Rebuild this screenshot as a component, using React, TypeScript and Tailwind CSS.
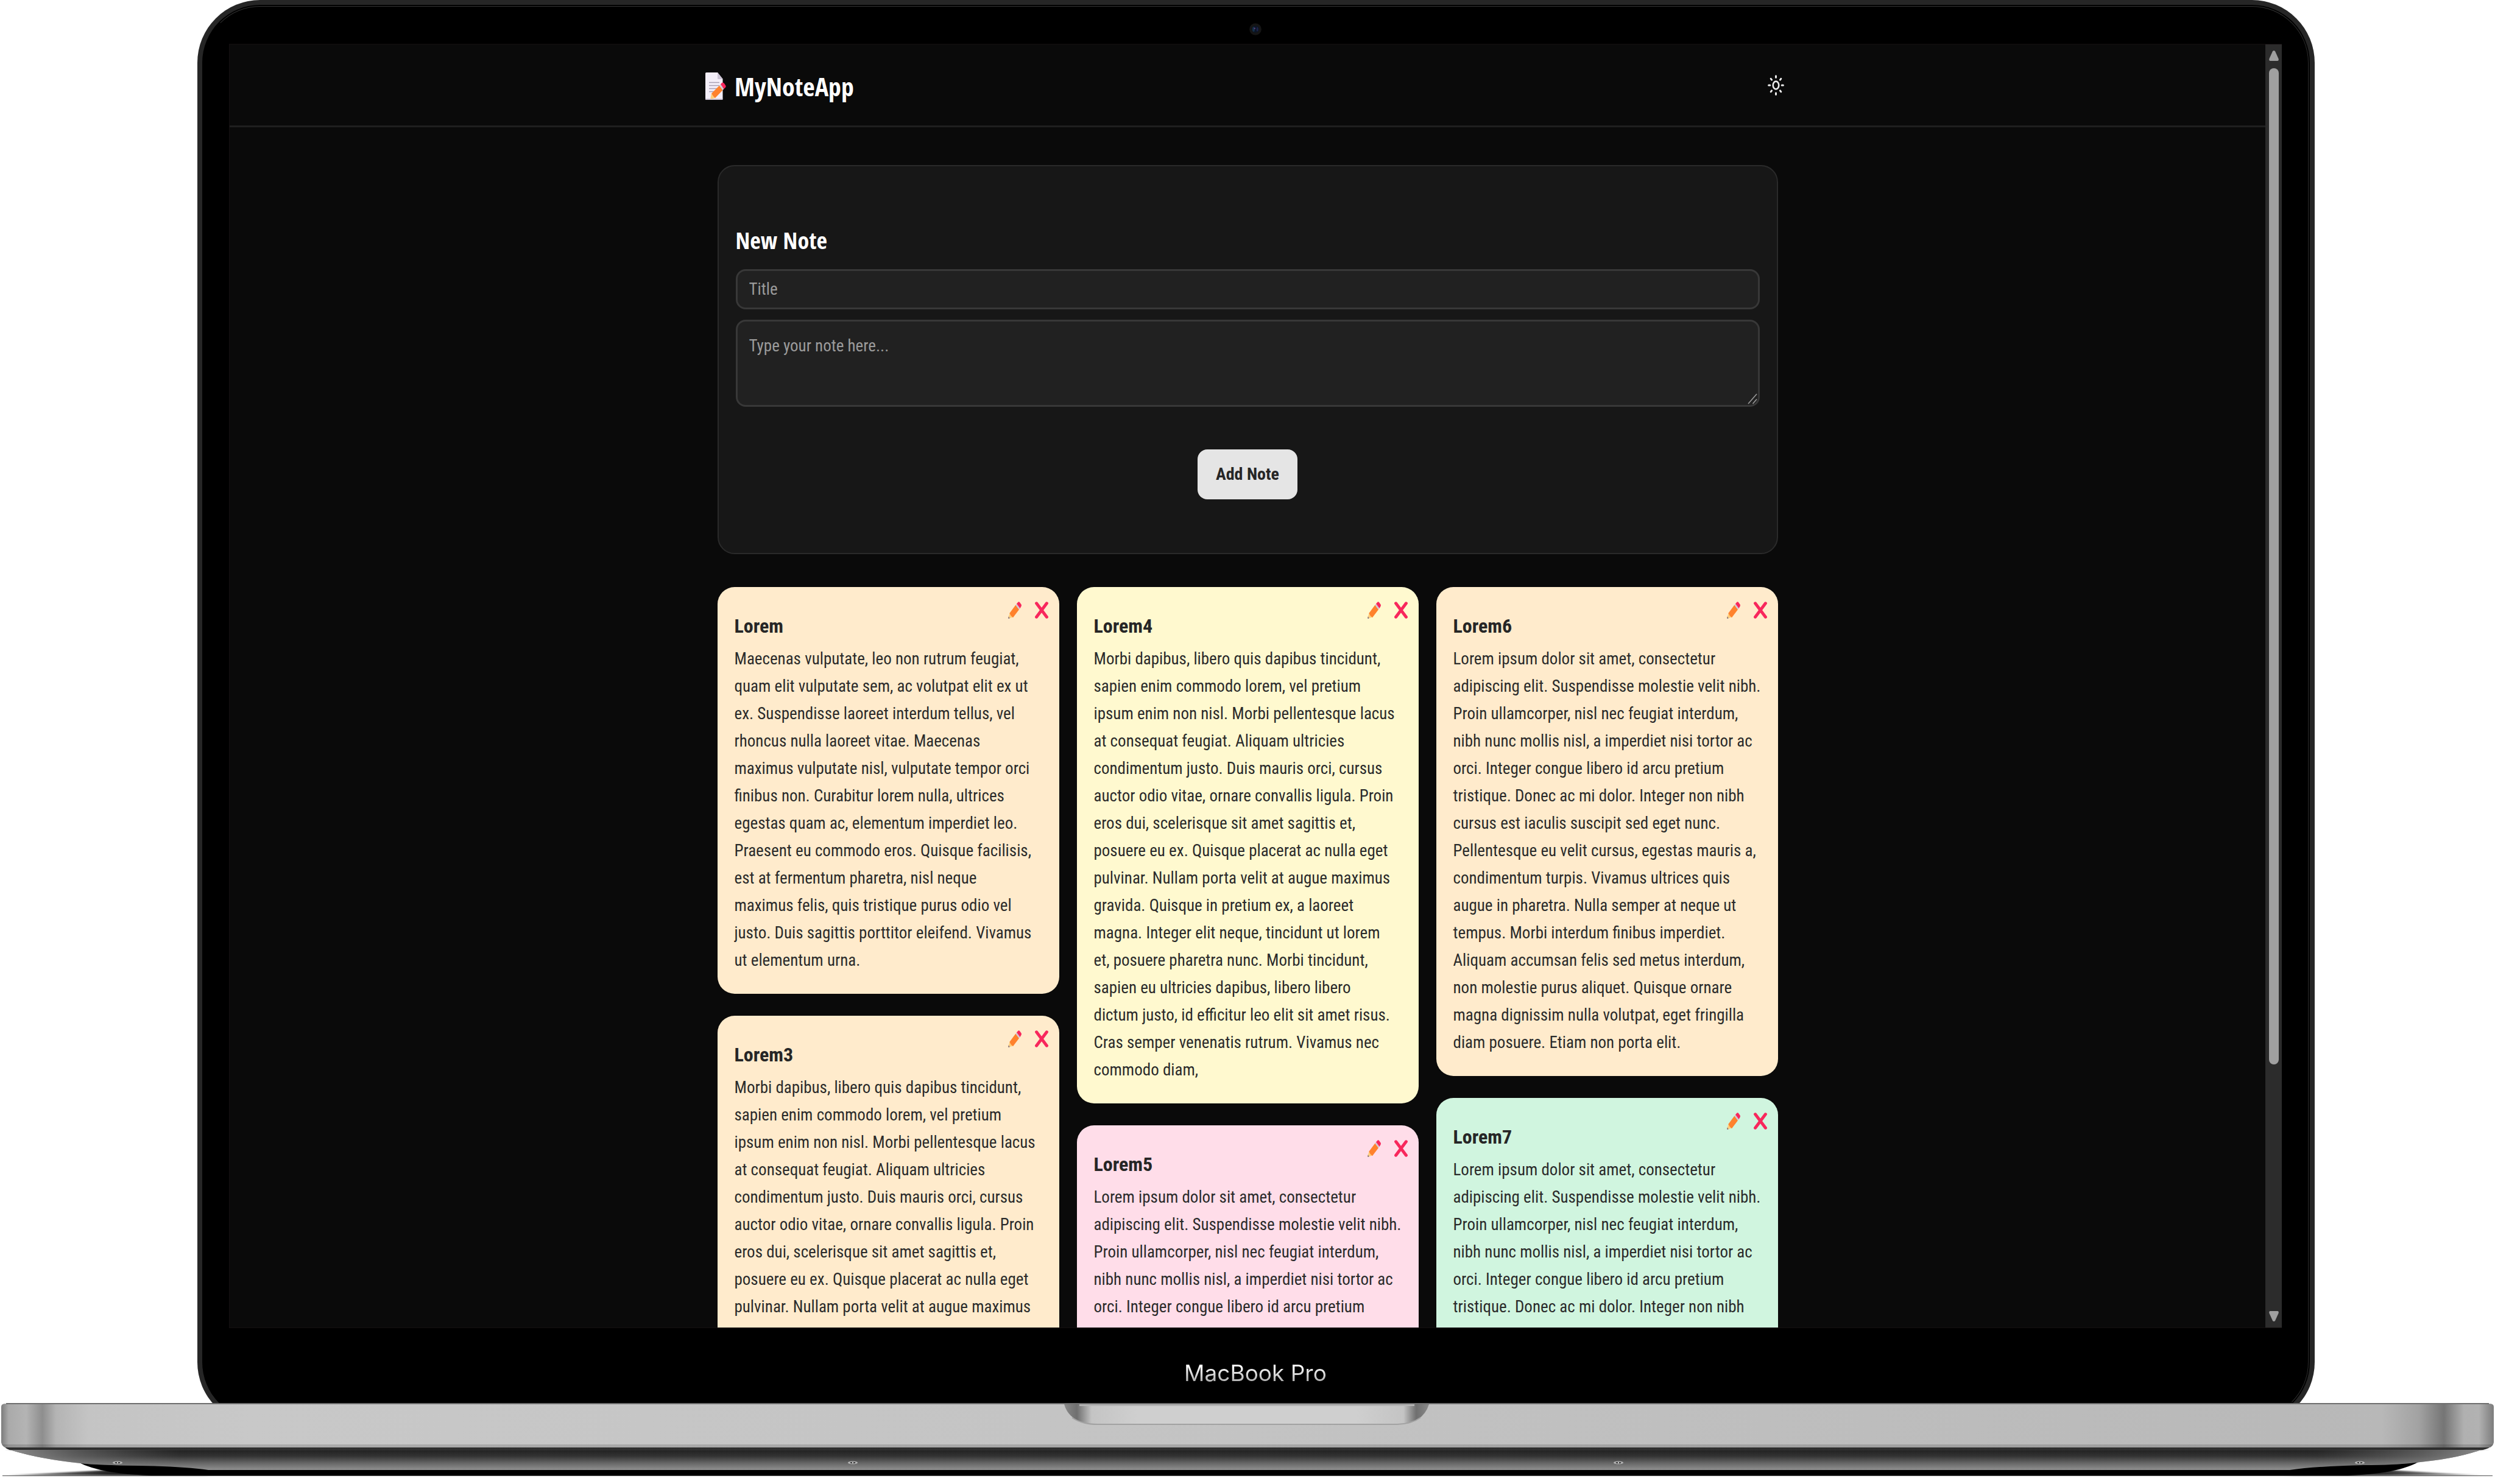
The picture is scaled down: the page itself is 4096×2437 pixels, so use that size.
import React from "react";

type Note = { title: string; tint: string; text: string };

const MORBI = `Morbi dapibus, libero quis dapibus tincidunt,
sapien enim commodo lorem, vel pretium
ipsum enim non nisl. Morbi pellentesque lacus
at consequat feugiat. Aliquam ultricies
condimentum justo. Duis mauris orci, cursus
auctor odio vitae, ornare convallis ligula. Proin
eros dui, scelerisque sit amet sagittis et,
posuere eu ex. Quisque placerat ac nulla eget
pulvinar. Nullam porta velit at augue maximus`;

const MORBI_REST = `
gravida. Quisque in pretium ex, a laoreet
magna. Integer elit neque, tincidunt ut lorem
et, posuere pharetra nunc. Morbi tincidunt,
sapien eu ultricies dapibus, libero libero
dictum justo, id efficitur leo elit sit amet risus.
Cras semper venenatis rutrum. Vivamus nec
commodo diam,`;

const IPSUM_SHORT = `Lorem ipsum dolor sit amet, consectetur
adipiscing elit. Suspendisse molestie velit nibh.
Proin ullamcorper, nisl nec feugiat interdum,
nibh nunc mollis nisl, a imperdiet nisi tortor ac
orci. Integer congue libero id arcu pretium`;

const IPSUM = `${IPSUM_SHORT}
tristique. Donec ac mi dolor. Integer non nibh`;

const IPSUM_REST = `
cursus est iaculis suscipit sed eget nunc.
Pellentesque eu velit cursus, egestas mauris a,
condimentum turpis. Vivamus ultrices quis
augue in pharetra. Nulla semper at neque ut
tempus. Morbi interdum finibus imperdiet.
Aliquam accumsan felis sed metus interdum,
non molestie purus aliquet. Quisque ornare
magna dignissim nulla volutpat, eget fringilla
diam posuere. Etiam non porta elit.`;

const MAECENAS = `Maecenas vulputate, leo non rutrum feugiat,
quam elit vulputate sem, ac volutpat elit ex ut
ex. Suspendisse laoreet interdum tellus, vel
rhoncus nulla laoreet vitae. Maecenas
maximus vulputate nisl, vulputate tempor orci
finibus non. Curabitur lorem nulla, ultrices
egestas quam ac, elementum imperdiet leo.
Praesent eu commodo eros. Quisque facilisis,
est at fermentum pharetra, nisl neque
maximus felis, quis tristique purus odio vel
justo. Duis sagittis porttitor eleifend. Vivamus
ut elementum urna.`;

const columns: Note[][] = [
  [
    { title: "Lorem", tint: "bg-[#ffebcc]", text: MAECENAS },
    { title: "Lorem3", tint: "bg-[#ffebcc]", text: MORBI },
  ],
  [
    { title: "Lorem4", tint: "bg-[#fff9cf]", text: MORBI + MORBI_REST },
    { title: "Lorem5", tint: "bg-[#ffdde9]", text: IPSUM_SHORT },
  ],
  [
    { title: "Lorem6", tint: "bg-[#ffebcc]", text: IPSUM + IPSUM_REST },
    { title: "Lorem7", tint: "bg-[#d0f5df]", text: IPSUM },
  ],
];

function MemoIcon() {
  return (
    <svg viewBox="0 0 34 45" className="h-[45px] w-[34px]" aria-hidden="true">
      <path d="M1.500 0H20L28.500 10.500V43.500A1.500 1.500 0 0 1 27 45H1.500A1.500 1.500 0 0 1 0 43.500V1.500A1.500 1.500 0 0 1 1.500 0Z" fill="#f3eef8" />
      <path d="M20 0L28.500 11H21.500A1.500 1.500 0 0 1 20 9.500Z" fill="#cdc4d6" />
      <path d="M0 43H28.500V43.500A1.500 1.500 0 0 1 27 45H1.500A1.500 1.500 0 0 1 0 43.500Z" fill="#cbc3d4" />
      <path d="M6 16.500H23M6 21.500H23M6 26.500H19M6 31.500H14" stroke="#a79fb3" strokeWidth="1.400" fill="none" />
      <path d="M10 34.500L16.500 41.500L10.500 43.500Q8 44 8.500 41.500Z" fill="#ffce7c" />
      <path d="M10 34.500L23 21.500L28.500 29L16 42Q12.500 39 10 34.500Z" fill="#ff822d" />
      <path d="M23 21.500L25 19.500L30.500 27L28.500 29Z" fill="#d3cbd9" />
      <path d="M25 19.500L27 17Q29 15.500 31 18L33 21Q34.300 23 33 24.500L30.500 27Z" fill="#f8275c" />
    </svg>
  );
}

function SunIcon() {
  return (
    <svg viewBox="0 0 27 34" className="h-[34px] w-[27px]" fill="none" stroke="#ededed" strokeLinecap="round" aria-hidden="true">
      <ellipse cx="13.500" cy="17" rx="4.800" ry="6.400" strokeWidth="2.600" />
      <path d="M13.500 1.800V4.200M13.500 29.800V32.200M1.600 17H3.800M23.200 17H25.400M5.200 6.300L6.600 8.100M20.400 25.900L21.800 27.700M5.200 27.700L6.600 25.900M20.400 8.100L21.800 6.300" strokeWidth="3" />
    </svg>
  );
}

function PencilIcon() {
  return (
    <svg viewBox="0 0 22 28" className="h-7 w-[22px]" aria-hidden="true">
      <path d="M2.600 18.800L7.800 25.600L1.800 27.600Q0 28 .4 26Z" fill="#ffce7c" />
      <path d="M.9 24.300L2.600 27.300L1.200 27.900Q0 28 .2 26.800Z" fill="#7d6a78" />
      <path d="M2.400 19L12.400 5.600L18 13L8 26.200Q4 23.500 2.400 19Z" fill="#ff822d" />
      <path d="M12.400 5.600L14 3.600L19.600 11L18 13Z" fill="#cfc8d6" />
      <path d="M14 3.600L16.400 .8Q17.800 -.4 19.300 1.400L21.300 4.200Q22.500 6 21.500 7.800L19.600 11Z" fill="#f8275c" />
    </svg>
  );
}

function CrossIcon() {
  return (
    <svg viewBox="0 0 22 28" className="h-7 w-[22px]" aria-hidden="true">
      <path d="M2.600 2.800L19.400 25.200M19.400 2.800L2.600 25.200" stroke="#f8275c" strokeWidth="5" strokeLinecap="round" fill="none" />
    </svg>
  );
}

function NoteCard({ note }: { note: Note }) {
  return (
    <article className={`relative rounded-[28px] px-7 pt-[42px] pb-8 last:pb-20 ${note.tint}`}>
      <div className="absolute top-6 right-[18px] flex gap-[22px]">
        <button aria-label={`Edit ${note.title}`}><PencilIcon /></button>
        <button aria-label={`Delete ${note.title}`}><CrossIcon /></button>
      </div>
      <h3 className="mb-[10px] text-[32px] leading-[44px] font-bold text-[#262626]">{note.title}</h3>
      <p className="text-[27px] leading-[45px] whitespace-pre text-[#2b2b2b]">{note.text}</p>
    </article>
  );
}

function Scrollbar() {
  return (
    <div className="flex w-[27px] shrink-0 flex-col items-center bg-[#2c2c2c] py-[10px]" aria-hidden="true">
      <svg viewBox="0 0 16 17" className="h-[17px] w-4"><path d="M8 0Q9.400 0 10.200 1.500L15.600 13.500Q16.400 17 14 17H2Q-.4 17 .4 13.500L5.800 1.500Q6.600 0 8 0Z" fill="#a0a0a0" /></svg>
      <div className="mt-3 w-4 flex-[1637] rounded-full bg-[#a0a0a0]" />
      <div className="flex-[405]" />
      <svg viewBox="0 0 16 17" className="h-[17px] w-4"><path d="M8 17Q6.600 17 5.800 15.500L.4 3.500Q-.4 0 2 0H14Q16.400 0 15.600 3.500L10.200 15.500Q9.400 17 8 17Z" fill="#a0a0a0" /></svg>
    </div>
  );
}

function NotesApp() {
  return (
    <div className="flex min-h-0 flex-1 overflow-hidden border border-[#140f10] border-r-0 bg-[#0a0a0a] font-['Roboto_Condensed',Roboto,sans-serif]">
      <div className="min-w-0 flex-1 overflow-hidden">
        <header className="border-b-[3px] border-[#1f1f1f]">
          <div className="mx-auto flex h-[133px] max-w-[1780px] items-center justify-between">
            <h1 className="flex items-center gap-[14px] pt-1 font-['Open_Sans_Condensed','Roboto_Condensed',sans-serif] text-[42px] leading-[60px] font-bold text-white">
              <MemoIcon />
              MyNoteApp
            </h1>
            <button aria-label="Toggle theme" className="px-[9px]"><SunIcon /></button>
          </div>
        </header>
        <main className="mx-auto max-w-[1741px] pt-[62px]">
          <form className="flex flex-col rounded-[28px] border-2 border-[#2a2a2a] bg-[#171717] px-7 pt-[97px] pb-[88px]">
            <h2 className="mb-6 font-['Open_Sans_Condensed','Roboto_Condensed',sans-serif] text-[38px] leading-[48px] font-bold text-white">New Note</h2>
            <input
              type="text"
              aria-label="Title"
              placeholder="Title"
              className="mb-[17px] h-[66px] rounded-[16px] border-[3px] border-[#383838] bg-[#212121] px-[19px] text-[27px] text-white placeholder:text-[#9b9b9b]"
            />
            <div className="relative flex">
              <textarea
                aria-label="Note"
                placeholder="Type your note here..."
                className="h-[143px] w-full resize-none rounded-[16px] border-[3px] border-[#383838] bg-[#212121] px-[19px] py-[18px] text-[27px] leading-[45px] text-white placeholder:text-[#9b9b9b]"
              />
              <svg viewBox="0 0 16 20" className="absolute right-1 bottom-1 h-5 w-4" stroke="#9b9b9b" strokeWidth="1.600" fill="none" aria-hidden="true">
                <path d="M1 19L15 3M8.500 19L15 11.500" />
              </svg>
            </div>
            <button type="button" className="mt-[70px] h-[82px] self-center rounded-[16px] bg-[#e5e5e5] px-[30px] text-[28px] font-bold text-[#262626]">Add Note</button>
          </form>
          <section className="mt-[54px] grid grid-cols-3 items-start gap-[29px]" aria-label="Notes">
            {columns.map((notes, i) => (
              <div key={i} className="flex flex-col gap-9">
                {notes.map((note) => <NoteCard key={note.title} note={note} />)}
              </div>
            ))}
          </section>
        </main>
      </div>
      <Scrollbar />
    </div>
  );
}

function Camera() {
  return (
    <svg viewBox="0 0 20 20" className="size-5" aria-hidden="true">
      <circle cx="10" cy="10" r="9.800" fill="#151515" />
      <circle cx="10" cy="10" r="5.800" fill="#0b1424" />
      <ellipse cx="7" cy="10" rx="2" ry="4" fill="#14304a" />
      <ellipse cx="13.200" cy="10" rx="1.500" ry="3.600" fill="#1c2148" />
      <circle cx="8.800" cy="8.600" r="1.200" fill="#6b3f7c" />
    </svg>
  );
}

function Screw({ x, y }: { x: number; y: number }) {
  return (
    <g>
      <ellipse cx={x} cy={y} rx="8" ry="2.600" fill="#b4b4b4" />
      <ellipse cx={x} cy={y} rx="4.500" ry="1.300" fill="#3a3a3a" />
      <rect x={x - 1} y={y - 1} width="2" height="2" fill="#c4c4c4" />
    </g>
  );
}

function LaptopBase() {
  return (
    <svg viewBox="0 0 4096 133" preserveAspectRatio="none" className="relative z-10 -mt-9 h-[133px] w-full shrink-0" aria-hidden="true">
      <defs>
        <linearGradient id="body" x1="0" x2="1" y1="0" y2="0">
          <stop offset="0" stopColor="#7c7c7c" />
          <stop offset=".003" stopColor="#aaaaaa" />
          <stop offset=".010" stopColor="#b4b4b4" />
          <stop offset=".0165" stopColor="#8e8e8e" />
          <stop offset=".022" stopColor="#b4b4b4" />
          <stop offset=".035" stopColor="#c4c4c4" />
          <stop offset=".1" stopColor="#c8c8c8" />
          <stop offset=".5" stopColor="#c3c3c3" />
          <stop offset=".75" stopColor="#bdbdbd" />
          <stop offset=".955" stopColor="#b8b8b8" />
          <stop offset=".970" stopColor="#a2a2a2" />
          <stop offset=".980" stopColor="#757575" />
          <stop offset=".988" stopColor="#b0b0b0" />
          <stop offset=".994" stopColor="#b2b2b2" />
          <stop offset="1" stopColor="#7c7c7c" />
        </linearGradient>
        <linearGradient id="under" x1="0" x2="0" y1="0" y2="1">
          <stop offset="0" stopColor="#2c2c2c" />
          <stop offset=".14" stopColor="#303030" />
          <stop offset=".17" stopColor="#242424" />
          <stop offset=".4" stopColor="#333333" />
          <stop offset=".7" stopColor="#666666" />
          <stop offset="1" stopColor="#909090" />
        </linearGradient>
        <linearGradient id="corner" x1="0" x2="1" y1="0" y2="0">
          <stop offset="0" stopColor="#b5b5b5" stopOpacity=".75" />
          <stop offset=".028" stopColor="#8a8a8a" stopOpacity=".5" />
          <stop offset=".07" stopColor="#777777" stopOpacity="0" />
          <stop offset=".93" stopColor="#777777" stopOpacity="0" />
          <stop offset=".972" stopColor="#8a8a8a" stopOpacity=".5" />
          <stop offset="1" stopColor="#b5b5b5" stopOpacity=".75" />
        </linearGradient>
        <linearGradient id="notch" x1="0" x2="1" y1="0" y2="0">
          <stop offset="0" stopColor="#8a8a8a" />
          <stop offset=".035" stopColor="#6f6f6f" />
          <stop offset=".075" stopColor="#c4c4c4" />
          <stop offset=".2" stopColor="#cfcfcf" />
          <stop offset=".8" stopColor="#cfcfcf" />
          <stop offset=".93" stopColor="#c4c4c4" />
          <stop offset=".965" stopColor="#6f6f6f" />
          <stop offset="1" stopColor="#8a8a8a" />
        </linearGradient>
        <linearGradient id="shadeL" x1="0" x2="1" y1="0" y2="0">
          <stop offset="0" stopColor="#000000" stopOpacity=".35" />
          <stop offset=".5" stopColor="#000000" stopOpacity=".85" />
          <stop offset="1" stopColor="#000000" />
        </linearGradient>
        <linearGradient id="shadeR" x1="1" x2="0" y1="0" y2="0">
          <stop offset="0" stopColor="#000000" stopOpacity=".2" />
          <stop offset=".5" stopColor="#000000" stopOpacity=".8" />
          <stop offset="1" stopColor="#000000" />
        </linearGradient>
        <filter id="soft" x="-10%" y="-50%" width="120%" height="200%">
          <feGaussianBlur stdDeviation="6 1" />
        </filter>
      </defs>
      <rect x="0" y="95" width="4096" height="38" fill="#ffffff" />
      <g filter="url(#soft)">
        <path d="M8 119L200 109H340V119Z" fill="url(#shadeL)" />
        <path d="M4080 119L3900 109H3760V119Z" fill="url(#shadeR)" />
      </g>
      <path d="M128 97Q170 119 270 119.500H3830Q3930 119 3970 97Z" fill="#000000" />
      <path d="M8 72H4088Q4084 76 4070 78Q4030 92 3965 98Q3930 102 3880 102Q3800 104 3759 110H342Q300 104 230 103Q160 102 132 99Q66 92 20 78Q10 76 8 72Z" fill="url(#under)" />
      <path d="M8 77H4088L4070 78Q4030 92 3965 98Q3930 102 3880 102Q3800 104 3759 110H342Q300 104 230 103Q160 102 132 99Q66 92 20 78Z" fill="url(#corner)" />
      <rect x="4" y="119" width="4088" height="1" fill="#555555" />
      <path d="M10 1H4086Q4094 1 4094 6V64Q4094 69 4088 73H8Q2 69 2 64V6Q2 1 10 1Z" fill="url(#body)" />
      <path d="M3 68H4093Q4092 71 4088 73H8Q4 71 3 68Z" fill="#000000" fillOpacity=".15" />
      <rect x="10" y="0" width="4076" height="2" fill="#6e6e6e" />
      <path d="M1747 2H2346Q2336 34 2294 36H1802Q1756 34 1747 2Z" fill="url(#notch)" />
      <path d="M1760 24Q1776 35 1802 35H2294Q2318 34 2332 24" fill="none" stroke="#a2a2a2" strokeWidth="2" />
      <rect x="1772" y="2" width="550" height="3" fill="#b4b4b4" />
      <Screw x={193} y={98} />
      <Screw x={1400} y={98} />
      <Screw x={2657} y={98} />
      <Screw x={3874} y={98} />
    </svg>
  );
}

export default function App() {
  return (
    <div className="flex h-screen flex-col overflow-hidden bg-white">
      <div className="flex min-h-0 flex-1 pr-[296px] pl-[324px]">
        <div className="flex min-w-0 flex-1 rounded-[103px] bg-[#262626] p-2">
          <div className="flex min-w-0 flex-1 rounded-[95px] bg-black p-[2px]">
            <div className="flex min-w-0 flex-1 flex-col rounded-[93px] border border-t-[#333333] border-r-[#2c2c2c] border-b-black border-l-black pr-[43px] pl-[41px]">
              <div className="flex h-[61px] shrink-0 items-center justify-center pt-3"><Camera /></div>
              <NotesApp />
              <div className="flex h-[148px] shrink-0 items-center justify-center">
                <span className="bg-gradient-to-b from-[#ffffff] from-30% to-[#a8a8a8] to-80% bg-clip-text font-[Inter,sans-serif] text-[37px] text-transparent">MacBook Pro</span>
              </div>
            </div>
          </div>
        </div>
      </div>
      <LaptopBase />
    </div>
  );
}
